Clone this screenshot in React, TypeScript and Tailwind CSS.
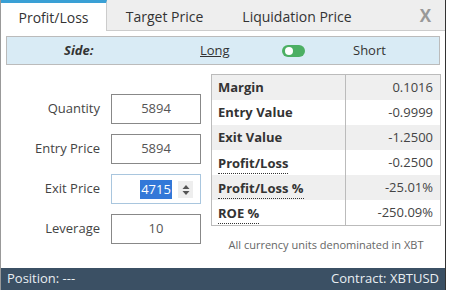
import React from "react";

const rows = [
  { label: "Margin", value: "0.1016", dotted: false },
  { label: "Entry Value", value: "-0.9999", dotted: false },
  { label: "Exit Value", value: "-1.2500", dotted: false },
  { label: "Profit/Loss", value: "-0.2500", dotted: true },
  { label: "Profit/Loss %", value: "-25.01%", dotted: true },
  { label: "ROE %", value: "-250.09%", dotted: true },
];

const fields = [
  { label: "Quantity", value: "5894" },
  { label: "Entry Price", value: "5894" },
  { label: "Exit Price", value: "4715", active: true },
  { label: "Leverage", value: "10" },
];

export default function App() {
  return (
    <div className="flex h-[290px] w-[450px] overflow-hidden bg-white font-['Open_Sans',sans-serif] text-[#333]">
      <div className="flex w-[446px] flex-col border-r border-l border-r-[#333] border-l-[#999]">
        {/* Tabs */}
        <div className="flex h-[31px] bg-[#eee]">
          <div className="flex w-[106px] items-center justify-center border-t-[3px] border-r border-t-[#3aa0d5] border-r-[#ccc] bg-white text-[14px]">
            Profit/Loss
          </div>
          <div className="flex flex-1 items-stretch border-b border-[#ccc]">
            <div className="flex w-[115px] items-center justify-center pt-[2px] text-[14px]">Target Price</div>
            <div className="flex w-[150px] items-center justify-center pt-[2px] text-[14px]">Liquidation Price</div>
            <div className="flex flex-1 items-center justify-end pr-[14px] pt-[2px] text-[17px] font-bold text-[#999]">
              X
            </div>
          </div>
        </div>

        <div className="flex flex-1 flex-col">
          {/* Side */}
          <div className="mx-[5px] mt-[5px] flex h-[29px] items-center border border-[#bbb] bg-[#d9ebf5] text-[13px]">
            <span className="ml-[57px] w-[136px] font-bold italic">Side:</span>
            <span className="w-[82px] underline">Long</span>
            <span className="relative h-[12px] w-[23px] rounded-full bg-[#4caf63]">
              <span className="absolute left-[3px] top-[2px] h-[8px] w-[8px] rounded-full bg-white" />
            </span>
            <span className="ml-[48px]">Short</span>
          </div>

          <div className="flex flex-1 pt-[9px]">
            {/* Inputs */}
            <div className="flex w-[210px] flex-col gap-[10px] pt-[20px]">
              {fields.map((f) => (
                <div key={f.label} className="flex items-center">
                  <span className="w-[99px] text-right text-[13px] text-[#444]">{f.label}</span>
                  <div
                    className={
                      f.active
                        ? "relative ml-[11px] flex h-[30px] w-[90px] items-center justify-center border border-[#a9c6de] text-[13px]"
                        : "ml-[11px] flex h-[30px] w-[90px] items-center justify-center border border-[#888] text-[13px] text-[#555]"
                    }
                  >
                    {f.active ? (
                      <>
                        <span className="bg-[#3378d8] px-[1px] leading-[19px] text-white">{f.value}</span>
                        <span className="absolute right-[7px] top-[6px] flex h-[17px] w-[15px] flex-col items-center justify-center bg-[#eee]">
                          <svg width="8" height="12" viewBox="0 0 8 12">
                            <path d="M4 1 L7.5 5 L0.5 5 Z" fill="#555" />
                            <path d="M4 11 L7.5 7 L0.5 7 Z" fill="#555" />
                          </svg>
                        </span>
                      </>
                    ) : (
                      f.value
                    )}
                  </div>
                </div>
              ))}
            </div>

            {/* Results */}
            <div className="flex w-[230px] flex-col">
              <div className="border border-[#bbb]">
                {rows.map((r, i) => (
                  <div
                    key={r.label}
                    className={i % 2 === 0 ? "flex h-[25px] items-center bg-[#efefef] text-[13px]" : "flex h-[25px] items-center bg-white text-[13px]"}
                  >
                    <span className="flex h-full w-[134px] items-center border-r border-[#bbb] pl-[6px] font-bold">
                      <span className={r.dotted ? "mt-[3px] border-b border-dotted border-[#333] pb-[2px] leading-[16px]" : ""}>{r.label}</span>
                    </span>
                    <span className="flex-1 pr-[7px] text-right text-[#444]">{r.value}</span>
                  </div>
                ))}
              </div>
              <div className="mt-[11px] text-center text-[11px] text-[#666]">All currency units denominated in XBT</div>
            </div>
          </div>

          {/* Footer */}
          <div className="flex h-[22px] items-center justify-between bg-[#3b5064] px-[6px] text-[13px] text-[#e9eef2]">
            <span>Position: ---</span>
            <span>Contract: XBTUSD</span>
          </div>
        </div>
      </div>
      <div className="flex-1 bg-white" />
    </div>
  );
}
